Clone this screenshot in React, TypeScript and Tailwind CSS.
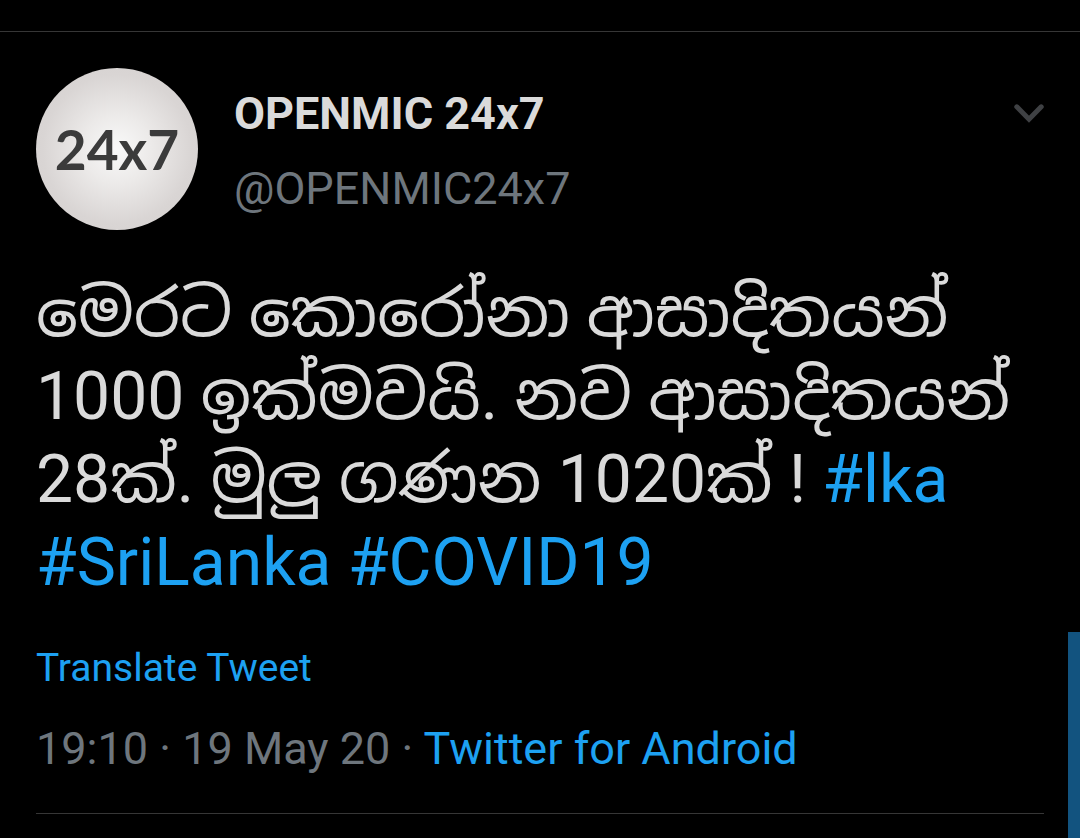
export default function App() {
  return (
    <main className="relative min-h-screen bg-black pt-[31px] font-[Roboto,'Noto_Sans_Sinhala','Noto_Sans',sans-serif] text-[#dadada]">
      <article className="border-t border-[#363636] px-9 pt-9">
        <header className="flex items-start gap-9">
          <div className="flex size-[162px] shrink-0 items-center justify-center rounded-full bg-[radial-gradient(circle,#f9f9f9_0%,#eceae9_30%,#d9d5d4_65%,#d3cfce_100%)] font-[Lato,sans-serif] text-[55px] leading-none font-bold text-[#3b3b3b]">
            24x7
          </div>
          <div className="flex min-w-0 flex-1 flex-col pt-2">
            <h1 className="text-[45px] leading-[75px] font-bold">OPENMIC 24x7</h1>
            <p className="text-[45px] leading-[75px] text-[#6e767d]">@OPENMIC24x7</p>
          </div>
          <button type="button" aria-label="More options" className="mt-[35px] text-[#3f4144]">
            <svg
              viewBox="0 0 30 22"
              className="h-[22px] w-[30px]"
              fill="none"
              stroke="currentColor"
              strokeWidth="5"
              strokeLinecap="round"
            >
              <path d="M2.8 3.8L15 16.2L27.2 3.8" />
            </svg>
          </button>
        </header>
        <p className="mt-[42px] text-[66px] leading-[83px]">
          මෙරට කොරෝනා ආසාදිතයන්<br />
          1000 ඉක්මවයි. නව ආසාදිතයන්<br />
          28ක්. මුලු ගණන 1020ක් ! <a href="#lka" className="text-[#1da1f2]">#lka</a><br />
          <a href="#SriLanka" className="text-[#1da1f2]">#SriLanka</a> <a href="#COVID19" className="text-[#1da1f2]">#COVID19</a>
        </p>
        <button type="button" className="mt-10 block text-[39px] leading-[48px] text-[#1da1f2]">Translate Tweet</button>
        <p className="mt-[29px] border-b border-[#363636] pb-9 text-[45px] leading-[56px] text-[#6e767d]">
          19:10 · 19 May 20 · <a href="#source" className="text-[#1da1f2]">Twitter for Android</a>
        </p>
      </article>
      <div className="absolute top-[632px] right-0 bottom-0 w-3 bg-[#12537f]" />
    </main>
  );
}
